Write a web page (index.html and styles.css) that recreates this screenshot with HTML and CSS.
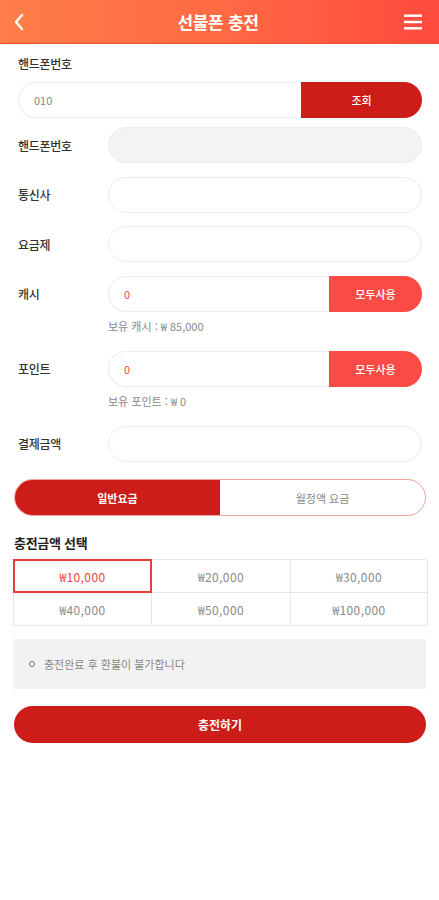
FILE: index.html
```html
<!DOCTYPE html>
<html lang="ko">
<head>
<meta charset="utf-8">
<title>선불폰 충전</title>
<link rel="stylesheet" href="styles.css">
</head>
<body>
<header class="topbar">
  <span class="back"><svg width="12" height="18" viewBox="0 0 12 18"><path d="M9 2 L3 9 L9 16" fill="none" stroke="#fff" stroke-width="2.4" stroke-linecap="round" stroke-linejoin="round"/></svg></span>
  <h1 class="title">선불폰 충전</h1>
  <span class="menu"><svg width="20" height="18" viewBox="0 0 20 18"><rect x="1" y="1.5" width="18" height="2.4" fill="#fff"/><rect x="1" y="7.8" width="18" height="2.4" fill="#fff"/><rect x="1" y="14.1" width="18" height="2.4" fill="#fff"/></svg></span>
</header>

<main class="page">
  <div class="lookup">
    <div class="label top-label">핸드폰번호</div>
    <div class="combo">
      <div class="combo-input muted">010</div>
      <div class="combo-btn dark">조회</div>
    </div>
  </div>

  <div class="row r1">
    <div class="label">핸드폰번호</div>
    <div class="field filled"></div>
  </div>
  <div class="row">
    <div class="label">통신사</div>
    <div class="field"></div>
  </div>
  <div class="row">
    <div class="label">요금제</div>
    <div class="field"></div>
  </div>
  <div class="row">
    <div class="label">캐시</div>
    <div class="combo grow">
      <div class="combo-input red">0</div>
      <div class="combo-btn light">모두사용</div>
    </div>
  </div>
  <div class="sub">보유 캐시 : ₩ 85,000</div>
  <div class="row after-sub">
    <div class="label">포인트</div>
    <div class="combo grow">
      <div class="combo-input red">0</div>
      <div class="combo-btn light">모두사용</div>
    </div>
  </div>
  <div class="sub">보유 포인트 : ₩ 0</div>
  <div class="row after-sub">
    <div class="label">결제금액</div>
    <div class="field"></div>
  </div>

  <div class="tabs">
    <div class="tab active">일반요금</div>
    <div class="tab">월정액 요금</div>
  </div>

  <h2 class="section">충전금액 선택</h2>
  <div class="amounts">
    <div class="amt selected">₩10,000</div>
    <div class="amt">₩20,000</div>
    <div class="amt">₩30,000</div>
    <div class="amt">₩40,000</div>
    <div class="amt">₩50,000</div>
    <div class="amt">₩100,000</div>
  </div>

  <div class="notice">
    <span class="dot"></span>
    <span>충전완료 후 환불이 불가합니다</span>
  </div>

  <div class="submit">충전하기</div>
</main>
</body>
</html>
```

FILE: styles.css
```css
* { box-sizing: border-box; }
html, body { margin: 0; padding: 0; background: #fff; }
body {
  font-family: "Noto Sans CJK KR", "Noto Sans", sans-serif;
  color: #333;
  font-size: 12px;
}
.topbar {
  height: 44px;
  display: flex;
  align-items: center;
  justify-content: space-between;
  padding: 0 16px 0 13px;
  background: linear-gradient(90deg, #ff7d48 0%, #ff6a44 50%, #ff4a3e 100%);
  border-bottom: 1.5px solid #f0502c;
}
.back { display: flex; width: 20px; }
.menu { display: flex; }
.title {
  margin: 0;
  font-size: 17px;
  font-weight: 700;
  color: #fff;
  letter-spacing: -0.3px;
}
.page { padding: 0 13px 0 13px; }
.lookup { padding: 0 4px 0 5px; }
.label {
  font-size: 12px;
  font-weight: 500;
  color: #333;
  letter-spacing: -0.3px;
}
.top-label { margin-top: 12px; line-height: 16px; }
.combo {
  display: flex;
  height: 36px;
  margin-top: 10px;
}
.combo.grow { flex: 1; margin-top: 0; }
.combo-input {
  flex: 1;
  border: 1px solid #ececec;
  border-right: none;
  border-radius: 18px 0 0 18px;
  display: flex;
  align-items: center;
  padding-left: 15px;
  font-size: 11px;
}
.muted { color: #888; }
.red { color: #f24a45; }
.combo-btn {
  display: flex;
  align-items: center;
  justify-content: center;
  color: #fff;
  border-radius: 0 18px 18px 0;
  font-size: 11px;
  font-weight: 500;
}
.combo-btn.dark { width: 121px; background: #cd1d18; }
.combo-btn.light { width: 93px; background: #fb4b45; }
.row {
  display: flex;
  align-items: center;
  height: 36px;
  margin: 13.5px 4px 0 5px;
}
.row.r1 { margin-top: 9px; }
.row .label { width: 90px; flex-shrink: 0; }
.field {
  flex: 1;
  height: 36px;
  border: 1px solid #ececec;
  border-radius: 18px;
}
.field.filled { background: #f3f3f3; }
.sub {
  margin: 7px 0 0 95px;
  font-size: 11px;
  line-height: 14px;
  color: #888;
}
.row.after-sub { margin-top: 18px; }
.tabs {
  display: flex;
  margin: 17.5px 0 0 1px;
  height: 37px;
  border: 1px solid #f2a0a0;
  border-radius: 19px;
  overflow: hidden;
}
.tab {
  flex: 1;
  display: flex;
  align-items: center;
  justify-content: center;
  font-size: 11px;
  color: #888;
}
.tab.active { background: #cd1d18; color: #fff; font-weight: 700; }
.section {
  margin: 18px 0 0 1px;
  font-size: 13px;
  font-weight: 700;
  color: #222;
  line-height: 18px;
  letter-spacing: -0.3px;
}
.amounts {
  display: grid;
  grid-template-columns: 138px 139px 137px;
  grid-auto-rows: 33px;
  margin-top: 7px;
  border-top: 1px solid #e6e6e6;
  border-left: 1px solid #e6e6e6;
}
.amt {
  display: flex;
  align-items: center;
  justify-content: center;
  border-right: 1px solid #e6e6e6;
  border-bottom: 1px solid #e6e6e6;
  font-size: 12px;
  letter-spacing: 0.4px;
  color: #8a8a8a;
}
.amt.selected {
  border: 2px solid #e8403e;
  color: #f24a45;
  margin: -1px 0 0 -1px;
}
.notice {
  margin-top: 13px;
  height: 50px;
  background: #f2f2f2;
  display: flex;
  align-items: center;
  gap: 9px;
  padding-left: 16px;
  font-size: 11px;
  color: #888;
}
.dot {
  width: 6px;
  height: 6px;
  border: 1.5px solid #777;
  border-radius: 50%;
}
.submit {
  margin: 17px 0 0 1px;
  height: 37px;
  border-radius: 19px;
  background: #cd1d18;
  color: #fff;
  font-weight: 700;
  font-size: 12px;
  display: flex;
  align-items: center;
  justify-content: center;
}
```
